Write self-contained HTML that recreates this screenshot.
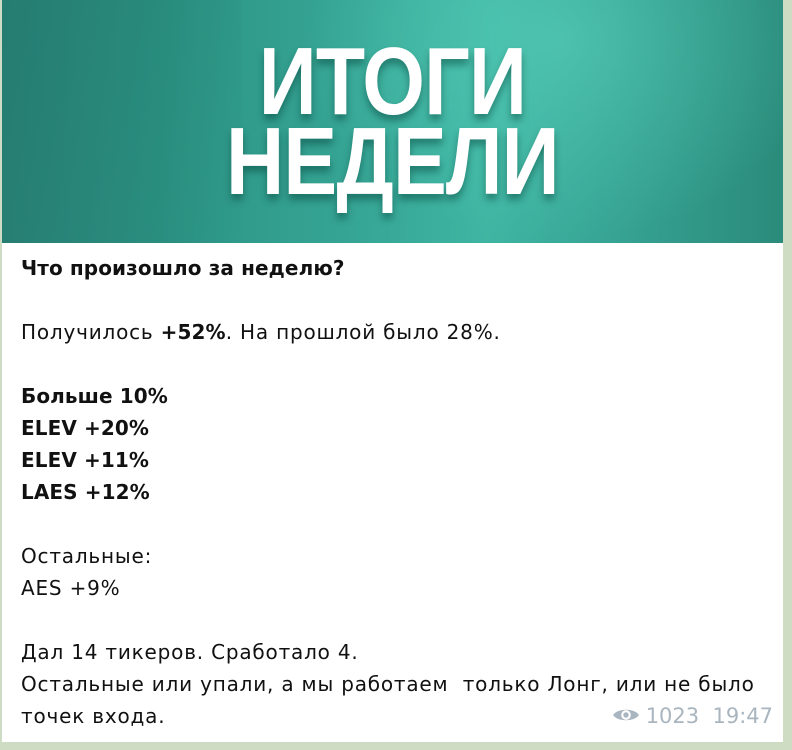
<!DOCTYPE html>
<html><head><meta charset="utf-8"><style>
html,body{margin:0;padding:0;width:792px;height:750px;overflow:hidden;background:#cfdcc4;}
.card{position:absolute;left:2px;top:0;width:781px;height:742px;background:#fff;}
.img{position:absolute;left:0;top:0;width:781px;height:243px;overflow:hidden;
background:radial-gradient(ellipse 260px 200px at 560px 40px,#4fc6b2 0%,rgba(79,198,178,0) 100%),
linear-gradient(90deg,#2f8e82 0%,#2c9484 20%,#36a595 45%,#3fb5a2 62%,#39a898 80%,#2f9585 100%);}
.img .l{position:absolute;left:0;top:0;width:240px;height:243px;background:linear-gradient(100deg,rgba(20,90,80,.35),rgba(20,90,80,0));}
.img .r{position:absolute;left:500px;top:0;width:281px;height:243px;background:linear-gradient(90deg,rgba(30,110,95,0),rgba(30,110,95,.25));}
.h{position:absolute;left:0;width:781px;text-align:center;color:#fff;font:bold 96px/1 "Liberation Sans",sans-serif;transform:scaleX(.84);transform-origin:390px 0;text-shadow:0 6px 8px rgba(0,60,50,.45);letter-spacing:-1px}
.txt{position:absolute;left:19px;top:252px;font:20px/32px "DejaVu Sans",sans-serif;letter-spacing:0.8px;color:#111;}
b{font-weight:bold;letter-spacing:0.1px}
.meta{position:absolute;right:10px;top:704px;font:21px "DejaVu Sans",sans-serif;color:#a9b5bf;}
</style></head><body>
<div class="card">
<div class="img"><div class="l"></div><div class="r"></div>
<div class="h" style="top:34px">ИТОГИ</div>
<div class="h" style="top:114px">НЕДЕЛИ</div>
</div>
<div class="txt">
<b>Что произошло за неделю?</b><br><br>
Получилось <b>+52%</b>. На прошлой было 28%.<br><br>
<b>Больше 10%</b><br><b>ELEV +20%</b><br><b>ELEV +11%</b><br><b>LAES +12%</b><br><br>
Остальные:<br>AES +9%<br><br>
Дал 14 тикеров. Сработало 4.<br>
Остальные или упали, а мы работаем&nbsp; только Лонг, или не было<br>
точек входа.
</div>
<div class="meta"><svg width="28" height="18" viewBox="0 0 26 16" style="vertical-align:-1px;margin-right:6px"><path d="M1 8C5 1.5 21 1.5 25 8C21 14.5 5 14.5 1 8Z" fill="#a9b5bf"/><circle cx="13" cy="8" r="4.5" fill="#fff"/><circle cx="13" cy="8" r="2.5" fill="#a9b5bf"/></svg>1023&nbsp; 19:47</div>
</div>
</body></html>
